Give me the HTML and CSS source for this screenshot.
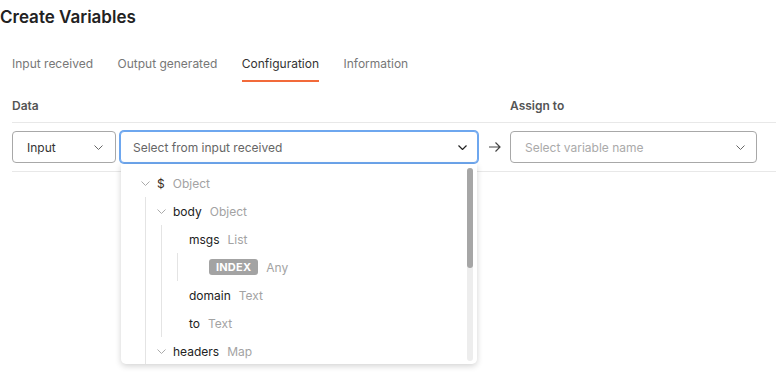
FILE: index.html
```html
<!DOCTYPE html>
<html lang="en">
<head>
<meta charset="utf-8">
<title>Create Variables</title>
<link rel="stylesheet" href="styles.css">
</head>
<body>
<h3 class="title">Create Variables</h3>

<div class="panel">
  <div class="tabs">
    <span class="tab">Input received</span>
    <span class="tab">Output generated</span>
    <span class="tab active">Configuration</span>
    <span class="tab">Information</span>
  </div>

  <div class="grid">
    <div class="head">Data</div>
    <div class="head col-assign">Assign to</div>

    <div class="cell data">
      <div class="select kind">
        <span class="value">Input</span>
        <svg class="chev" width="9" height="5" viewBox="0 0 9 5"><path d="M.5.5 4.5 4.5 8.5.5" fill="none" stroke="#666" stroke-width="1"/></svg>
      </div>
      <div class="picker">
        <div class="select source focus">
          <span class="value muted">Select from input received</span>
          <svg class="chev" width="9" height="5" viewBox="0 0 9 5"><path d="M.5.5 4.5 4.5 8.5.5" fill="none" stroke="#222" stroke-width="1.2"/></svg>
        </div>
        <div class="menu">
          <div class="tree">
            <div class="node">
              <div class="row"><span class="tog"><svg width="9" height="5" viewBox="0 0 9 5"><path d="M.5.5 4.5 4.5 8.5.5" fill="none" stroke="#aaa"/></svg></span><span class="name dollar">$</span><span class="type">Object</span></div>
              <div class="kids">
                <div class="node">
                  <div class="row"><span class="tog"><svg width="9" height="5" viewBox="0 0 9 5"><path d="M.5.5 4.5 4.5 8.5.5" fill="none" stroke="#aaa"/></svg></span><span class="name">body</span><span class="type">Object</span></div>
                  <div class="kids">
                    <div class="node">
                      <div class="row"><span class="tog"></span><span class="name">msgs</span><span class="type">List</span></div>
                      <div class="kids">
                        <div class="row"><span class="tog"></span><span class="badge">INDEX</span><span class="type">Any</span></div>
                      </div>
                    </div>
                    <div class="row"><span class="tog"></span><span class="name">domain</span><span class="type">Text</span></div>
                    <div class="row"><span class="tog"></span><span class="name">to</span><span class="type">Text</span></div>
                  </div>
                </div>
                <div class="node">
                  <div class="row"><span class="tog"><svg width="9" height="5" viewBox="0 0 9 5"><path d="M.5.5 4.5 4.5 8.5.5" fill="none" stroke="#aaa"/></svg></span><span class="name">headers</span><span class="type">Map</span></div>
                </div>
              </div>
            </div>
          </div>
          <div class="scroll"><div class="thumb"></div></div>
        </div>
      </div>
    </div>

    <div class="cell arrow">
      <svg width="12" height="10" viewBox="0 0 12 10"><path d="M0 5h11M6.5.5 11 5 6.5 9.5" fill="none" stroke="#444" stroke-width="1.2"/></svg>
    </div>

    <div class="cell">
      <div class="select assign">
        <span class="value faint">Select variable name</span>
        <svg class="chev" width="9" height="5" viewBox="0 0 9 5"><path d="M.5.5 4.5 4.5 8.5.5" fill="none" stroke="#666" stroke-width="1"/></svg>
      </div>
    </div>
  </div>
</div>
</body>
</html>
```

FILE: styles.css
```css
html, body { height: 100%; }
body { margin: 0; padding-top: 5px; box-sizing: border-box; background: #fff; font-family: Inter, "Noto Sans", sans-serif; color: #222; }
.title { margin: 0; font-size: 17px; line-height: 24px; font-weight: 600; color: #222; }

.panel { padding-left: 12px; }

.tabs { display: flex; gap: 24.5px; margin-top: 25px; }
.tab { font-size: 12px; line-height: 18px; padding: 1px 0 7px; border-bottom: 2px solid transparent; color: #777; }
.tab.active { color: #333; border-bottom-color: #f26a3a; }

.grid { display: grid; grid-template-columns: 466px 32px 247px 1fr; margin-top: 15px; }
.head { font-size: 12px; line-height: 16px; font-weight: 600; color: #555; padding: 1px 0 8px; border-bottom: 1px solid #e8e8e8; }
.head.col-assign { grid-column: 3 / 5; }
.head:first-child { grid-column: 1 / 3; }
.cell { padding: 8px 0; border-bottom: 1px solid #e8e8e8; }
.cell:last-child { grid-column: 3 / 5; }
.cell.data { display: flex; gap: 4px; }
.cell.arrow { display: flex; align-items: center; justify-content: center; padding-left: 2px; }

.select { box-sizing: border-box; height: 32px; display: flex; align-items: center; justify-content: space-between; border: 1px solid #a8a8a8; border-radius: 4px; font-size: 12px; background: #fff; }
.select .value { color: #333; }
.select .muted { color: #666; }
.select .faint { color: #aaa; }
.kind { width: 104px; padding: 0 12px 0 14px; }
.assign { width: 247px; padding: 0 11px 0 14px; }
.source { width: 358px; padding: 0 10px 0 12px; }
.focus { border-color: #6ea7ef; box-shadow: 0 0 0 1px #6ea7ef; }

.picker { position: relative; }
.menu { position: absolute; left: 1px; top: 33px; width: 356px; height: 200px; overflow: hidden; background: #fff; border-radius: 0 0 5px 5px; box-shadow: 0 2px 6px rgba(0,0,0,.18); z-index: 2; }
.tree { padding: 5px 0 0 16px; font-size: 12px; }
.row { display: flex; align-items: center; height: 28px; }
.tog { width: 16px; display: flex; justify-content: center; align-items: center; }
.name { margin-left: 4px; color: #222; }
.dollar { color: #3a2c22; }
.type { margin-left: 8px; color: #a3a3a3; }
.kids { margin-left: 8px; padding-left: 7px; border-left: 1px solid #e4e4e4; }
.badge { margin-left: 8px; padding: 0 7px; height: 16px; line-height: 16px; border-radius: 3px; background: #a3a3a3; color: #fff; font-size: 11px; font-weight: 700; letter-spacing: .2px; }
.badge + .type { margin-left: 8px; }

.scroll { position: absolute; right: 4px; top: 4px; bottom: 3px; width: 6px; border-radius: 3px; background: #ededed; }
.thumb { height: 100px; border-radius: 3px; background: #a6a6a6; }
```
